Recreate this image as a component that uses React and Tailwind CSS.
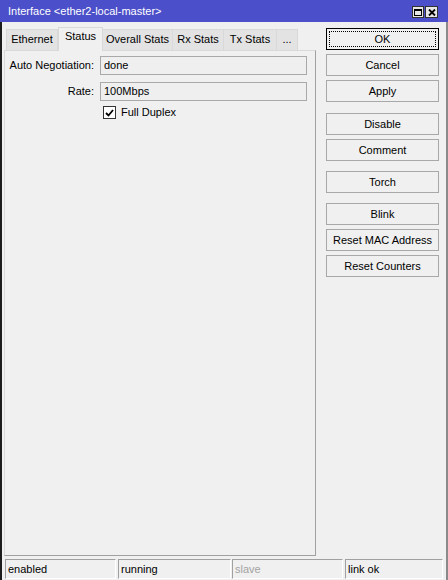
import React from 'react';

const TABS = [
  { label: 'Ethernet', w: 'w-[52px]' },
  { label: 'Status', w: 'w-[45px]', active: true },
  { label: 'Overall Stats', w: 'w-[70px]' },
  { label: 'Rx Stats', w: 'w-[51px]' },
  { label: 'Tx Stats', w: 'w-[53px]' },
  { label: '...', w: 'w-[21px]' },
];

function Tab({ label, w, active }) {
  if (active) {
    return (
      <div
        className={`${w} relative z-10 -mb-px flex h-[24px] items-start justify-center border border-b-0 border-[#d9d9d9] bg-[#f0f0f0] pt-[3px]`}
      >
        {label}
      </div>
    );
  }
  return (
    <div
      className={`${w} flex h-[21px] items-start justify-center border border-b-0 border-l-0 border-[#d9d9d9] bg-[#e3e3e3] pt-[4px] first:border-l`}
    >
      {label}
    </div>
  );
}

function Field({ label, value }) {
  return (
    <div className="flex items-center">
      <span className="w-[95px] pr-[6px] text-right">{label}</span>
      <div className="flex h-[19px] w-[207px] items-center border border-[#a9a9a9] bg-[#efefef] pl-[3px]">
        {value}
      </div>
    </div>
  );
}

function Button({ children, focused, className = '' }) {
  if (focused) {
    return (
      <div className={`h-[22px] border border-black bg-[#f0f0f0] p-[2px] ${className}`}>
        <div className="flex h-full items-center justify-center border border-dotted border-black">
          {children}
        </div>
      </div>
    );
  }
  return (
    <div
      className={`flex h-[22px] items-center justify-center border border-[#a8a8a8] bg-[#f0f0f0] ${className}`}
    >
      {children}
    </div>
  );
}

function StatusCell({ children, w, gray, className = '' }) {
  return (
    <div
      className={`${w} flex h-[20px] items-center border-l border-t border-b border-r border-l-[#a0a0a0] border-t-[#a0a0a0] border-b-white border-r-white pl-[2px] ${
        gray ? 'text-[#a3a3a3]' : 'text-black'
      } ${className}`}
    >
      {children}
    </div>
  );
}

export default function App() {
  return (
    <div className="flex h-[580px] w-[448px] flex-col bg-[#f0f0f0] font-['Liberation_Sans',Arial,sans-serif] text-[11px] leading-none text-black">
      {/* title bar */}
      <div className="flex h-[22px] items-center justify-between bg-[#4b4fc9] pl-[8px] pr-[10px] text-white">
        <span className="pt-[1px]">Interface &lt;ether2-local-master&gt;</span>
        <div className="flex gap-px pt-[2px]">
          <div className="flex h-[12px] w-[12px] items-center justify-center border border-[#333] bg-[#e6e6e6]">
            <svg width="8" height="7" viewBox="0 0 8 7">
              <rect x="0.5" y="0.5" width="7" height="6" fill="none" stroke="#000" />
              <rect x="0" y="0" width="8" height="2" fill="#000" />
            </svg>
          </div>
          <div className="flex h-[12px] w-[13px] items-center justify-center border border-[#333] bg-[#e6e6e6]">
            <svg width="8" height="7" viewBox="0 0 8 7">
              <path d="M1 0.5 L7 6.5 M7 0.5 L1 6.5" stroke="#000" strokeWidth="1.8" />
            </svg>
          </div>
        </div>
      </div>

      <div className="flex flex-1 flex-col border-l-2 border-r-2 border-l-[#1c1c1c] border-r-[#8a8a8a]">
        <div className="flex flex-1">
          {/* tabs + panel */}
          <div className="ml-[2px] flex w-[312px] flex-col pt-[4px]">
            <div className="flex h-[24px] items-end pl-[2px]">
              {TABS.map((t) => (
                <Tab key={t.label} {...t} />
              ))}
            </div>
            <div className="flex flex-1 flex-col gap-[7px] border border-l-[#d9d9d9] border-t-[#d9d9d9] border-b-[#a0a0a0] border-r-[#a0a0a0] pt-[5px]">
              <Field label="Auto Negotiation:" value="done" />
              <Field label="Rate:" value="100Mbps" />
              <div className="-mt-[2px] flex items-center pl-[98px]">
                <div className="flex h-[13px] w-[13px] items-center justify-center border border-[#333] bg-white">
                  <svg width="9" height="8" viewBox="0 0 9 8">
                    <path d="M1 4 L3.5 6.5 L8 1" fill="none" stroke="#000" strokeWidth="1.8" />
                  </svg>
                </div>
                <span className="pl-[5px]">Full Duplex</span>
              </div>
            </div>
          </div>

          {/* buttons */}
          <div className="ml-[10px] flex w-[113px] flex-col gap-[4px] pt-[6px]">
            <Button focused>OK</Button>
            <Button>Cancel</Button>
            <Button>Apply</Button>
            <Button className="mt-[7px]">Disable</Button>
            <Button>Comment</Button>
            <Button className="mt-[6px]">Torch</Button>
            <Button className="mt-[6px]">Blink</Button>
            <Button>Reset MAC Address</Button>
            <Button>Reset Counters</Button>
          </div>
        </div>

        {/* status bar */}
        <div className="flex h-[24px] items-start pt-[3px]">
          <StatusCell w="w-[111px]" className="ml-[3px]">enabled</StatusCell>
          <StatusCell w="w-[113px]" className="ml-[2px]">running</StatusCell>
          <StatusCell w="w-[111px]" className="ml-[1px]" gray>slave</StatusCell>
          <StatusCell w="w-[98px]" className="ml-[2px]">link ok</StatusCell>
        </div>
      </div>
    </div>
  );
}
